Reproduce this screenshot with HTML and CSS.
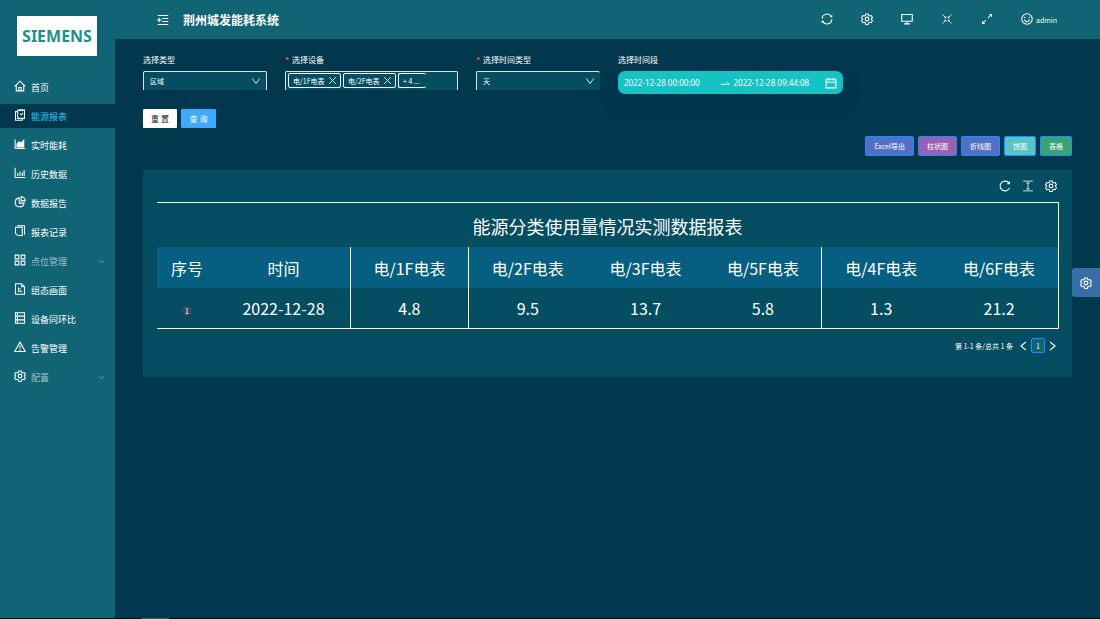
FILE: index.html
```html
<!DOCTYPE html>
<html lang="zh-CN">
<head>
<meta charset="utf-8">
<title>荆州城发能耗系统</title>
<link rel="stylesheet" href="styles.css">
</head>
<body>
<svg class="defs" aria-hidden="true">
  <symbol id="gear" viewBox="0 0 16 16"><path d="M6.3 1.2h3.4l.5 2 1.5.8 2-.6 1.6 2.8-1.4 1.5v1l1.4 1.5-1.6 2.8-2-.6-1.5.8-.5 2H6.3l-.5-2-1.5-.8-2 .6L.7 10.200l1.400-1.500v-1L.7 6.200l1.600-2.800 2 .6 1.500-.8z"/><circle cx="8" cy="8" r="2.500"/></symbol>
  <symbol id="down" viewBox="0 0 16 16"><path d="M2 4l6 8 6-8"/></symbol>
  <symbol id="cross" viewBox="0 0 16 16"><path d="M2 2l12 12M14 2L2 14"/></symbol>
</svg>
<div class="app">
  <aside class="sidebar">
    <div class="logo">SIEMENS</div>
    <nav class="menu">
      <a class="item" href="#"><svg class="icon" viewBox="0 0 16 16"><path d="M1 8.500L8 1.500l7 7M3 7v7.500h10V7M6.500 14.500V10h3v4.500"/></svg><span>首页</span></a>
      <a class="item active" href="#"><svg class="icon" viewBox="0 0 16 16"><path d="M5 3.500H2v11.500h9v-2M5 1.500h9v11H5zM8 0v3M11 0v3M8 6l2 2 2-3"/></svg><span>能源报表</span></a>
      <a class="item" href="#"><svg class="icon" viewBox="0 0 16 16"><path d="M1.500 2v12H15"/><path class="solid" d="M4 12V8l3-3 2 2 4-4v9z"/></svg><span>实时能耗</span></a>
      <a class="item" href="#"><svg class="icon" viewBox="0 0 16 16"><path d="M1.500 1v13H15M5 12V8M8 12V6M11 12V7M13.500 12V4"/></svg><span>历史数据</span></a>
      <a class="item" href="#"><svg class="icon" viewBox="0 0 16 16"><path d="M7 2.500a6 6 0 1 0 6.500 7H7zM9.500 1v5.500H15A5.500 5.500 0 0 0 9.500 1z"/></svg><span>数据报告</span></a>
      <a class="item" href="#"><svg class="icon" viewBox="0 0 16 16"><path d="M2 3h9v11H5l-3-3zM4 1h10v12"/></svg><span>报表记录</span></a>
      <a class="item dim" href="#"><svg class="icon" viewBox="0 0 16 16"><path d="M1.500 1.500h5v5h-5zM9.500 1.500h5v5h-5zM1.500 9.500h5v5h-5zM9.500 9.500h5v5h-5z"/></svg><span>点位管理</span><svg class="arrow" viewBox="0 0 16 16"><path d="M3 5l5 6 5-6"/></svg></a>
      <a class="item" href="#"><svg class="icon" viewBox="0 0 16 16"><path d="M2 1h8l4 4v10H2zM10 1v4h4M6 6v5h5M6 8h3"/></svg><span>组态画面</span></a>
      <a class="item" href="#"><svg class="icon" viewBox="0 0 16 16"><path d="M2 1h12v14H2zM2 5.500h12M2 10.500h12M4.500 1v14"/></svg><span>设备同环比</span></a>
      <a class="item" href="#"><svg class="icon" viewBox="0 0 16 16"><path d="M8 1.500L15 14H1zM8 6v4M8 11v2"/></svg><span>告警管理</span></a>
      <a class="item dim" href="#"><svg class="icon"><use href="#gear"/></svg><span>配置</span><svg class="arrow" viewBox="0 0 16 16"><path d="M3 5l5 6 5-6"/></svg></a>
    </nav>
  </aside>
  <div class="page">
    <header class="topbar">
      <button class="tool" aria-label="收起菜单"><svg class="icon" viewBox="0 0 16 16"><path d="M1 2h14M7 6h8M7 10h8M1 14h14M1 8h5M4 5.500L1 8l3 2.500"/></svg></button>
      <h1 class="brand">荆州城发能耗系统</h1>
      <div class="tools">
        <button class="tool" aria-label="刷新"><svg class="icon" viewBox="0 0 16 16"><path d="M1.500 7.500a6.500 6.500 0 0 1 12-3M14.500 8.500a6.500 6.500 0 0 1-12 3M14.500 3v2h-2.500M1.500 13v-2h2.500"/></svg></button>
        <button class="tool" aria-label="设置"><svg class="icon"><use href="#gear"/></svg></button>
        <button class="tool" aria-label="大屏"><svg class="icon" viewBox="0 0 16 16"><path d="M1 2h14v9H1zM8 11v3M4 14.500h8"/></svg></button>
        <button class="tool" aria-label="全屏"><svg class="icon thin" viewBox="0 0 16 16"><path d="M2 2l4.500 4.500M14 2L9.500 6.500M2 14l4.500-4.500M14 14L9.500 9.500M6.500 4.500v2h-2M9.500 4.500v2h2M6.500 11.500v-2h-2M9.500 11.500v-2h2"/></svg></button>
        <button class="tool" aria-label="展开"><svg class="icon" viewBox="0 0 16 16"><path d="M2 14l4.500-4.500M9 7l5-5M11 2h3v3M2 11v3h3"/></svg></button>
        <button class="tool user"><svg class="icon" viewBox="0 0 16 16"><circle cx="8" cy="8" r="7"/><path d="M4.500 8.500c1 4 6 4 7 0M5 5v1.500M11 5v1.500"/></svg><span>admin</span></button>
      </div>
    </header>
    <main class="content">
      <form class="filters">
        <div class="field short">
          <label for="type">选择类型</label>
          <div class="box"><select id="type"><option>区域</option></select><svg class="caret"><use href="#down"/></svg></div>
        </div>
        <div class="field wide">
          <span class="label" id="device"><b class="star">*</b>选择设备</span>
          <div class="box tags" role="group" aria-labelledby="device">
            <span class="tag">电/1F电表<button type="button" class="remove" aria-label="移除 电/1F电表"><svg><use href="#cross"/></svg></button></span>
            <span class="tag">电/2F电表<button type="button" class="remove" aria-label="移除 电/2F电表"><svg><use href="#cross"/></svg></button></span>
            <span class="tag more">+ 4 ...</span>
          </div>
        </div>
        <div class="field short">
          <label for="period"><b class="star">*</b>选择时间类型</label>
          <div class="box open"><select id="period"><option>天</option></select><svg class="caret"><use href="#down"/></svg></div>
        </div>
        <div class="field range">
          <label for="from">选择时间段</label>
          <div class="dates">
            <input id="from" type="text" value="2022-12-28 00:00:00">
            <svg class="to" viewBox="0 0 16 16"><path d="M1 10h14l-4-4"/></svg>
            <input type="text" aria-label="结束时间" value="2022-12-28 09:44:08">
            <svg class="icon" viewBox="0 0 16 16"><path d="M1.500 3h13v11.500h-13zM1.500 7h13M5 1v4M11 1v4"/></svg>
          </div>
        </div>
      </form>
      <div class="actions">
        <button class="btn reset">重 置</button>
        <button class="btn query">查 询</button>
      </div>
      <div class="charts">
        <button class="chart blue">Excel导出</button>
        <button class="chart purple">柱状图</button>
        <button class="chart blue">折线图</button>
        <button class="chart cyan">饼图</button>
        <button class="chart green">表格</button>
      </div>
      <section class="panel">
        <div class="panel-tools">
          <button class="tool" aria-label="刷新表格"><svg class="icon" viewBox="0 0 16 16"><path d="M13.500 4.500a6.500 6.500 0 1 0 .5 6M14 2v3h-3"/></svg></button>
          <button class="tool" aria-label="密度"><svg class="icon thin" viewBox="0 0 16 16"><path d="M1.500 1.500h13M1.500 14.500h13M8 3v10M6 5l2-2 2 2M6 11l2 2 2-2"/></svg></button>
          <button class="tool" aria-label="列设置"><svg class="icon"><use href="#gear"/></svg></button>
        </div>
        <table class="report">
          <colgroup><col class="c-index"><col class="c-time"><col span="6"></colgroup>
          <thead>
            <tr class="title"><th colspan="8">能源分类使用量情况实测数据报表</th></tr>
            <tr class="heads"><th>序号</th><th class="line">时间</th><th class="line">电/1F电表</th><th>电/2F电表</th><th>电/3F电表</th><th class="line">电/5F电表</th><th>电/4F电表</th><th>电/6F电表</th></tr>
          </thead>
          <tbody>
            <tr><td><span class="badge">1</span></td><td class="line">2022-12-28</td><td class="line">4.8</td><td>9.5</td><td>13.7</td><td class="line">5.8</td><td>1.3</td><td>21.2</td></tr>
          </tbody>
        </table>
        <div class="pager">
          <span>第 1-1 条/总共 1 条</span>
          <button class="step" aria-label="上一页"><svg viewBox="0 0 8 12"><path d="M7 1L1 6l6 5"/></svg></button>
          <button class="current">1</button>
          <button class="step" aria-label="下一页"><svg viewBox="0 0 8 12"><path d="M1 1l6 5-6 5"/></svg></button>
        </div>
      </section>
    </main>
  </div>
</div>
<button class="drawer" aria-label="主题设置"><svg class="icon"><use href="#gear"/></svg></button>
<div class="scrollbar"></div>
</body>
</html>
```

FILE: styles.css
```css
* { box-sizing: border-box; }
body {
  margin: 0;
  background: #01384e;
  color: #fff;
  font-family: "Noto Sans CJK SC", "Noto Sans", sans-serif;
  font-size: 8px;
  line-height: 12px;
}
button, input, select { font: inherit; color: inherit; margin: 0; padding: 0; border: 0; background: none; }
button { cursor: pointer; }
svg { display: block; fill: none; stroke: currentColor; stroke-width: 1.4; }
.defs { position: absolute; width: 0; height: 0; }
.solid { fill: currentColor; }
.icon { width: 12px; height: 12px; flex: none; }
.thin { stroke-width: 1.1; }

.app { display: flex; min-height: 100vh; }
.sidebar { width: 115px; flex: none; background: #106473; padding-top: 16px; }
.logo {
  width: 80px; height: 40px; margin-left: 17px;
  display: flex; align-items: center; justify-content: center;
  background: #fff; color: #1a918d;
  font: bold 16px/24px "Noto Sans", sans-serif;
}
.menu { display: flex; flex-direction: column; gap: 5px; margin-top: 19px; }
.item {
  display: flex; align-items: center; gap: 5px;
  height: 24px; padding: 1px 10px 0 14px;
  color: #fff; font-size: 9px; text-decoration: none;
}
.item .icon { margin-bottom: 4px; color: #fff; }
.item.active { background: #01384e; color: #26c6ee; }
.item.dim { color: #9fc1c7; }
.arrow { width: 7px; height: 7px; margin-left: auto; }

.page { flex: 1; min-width: 0; }
.topbar { display: flex; align-items: center; height: 39px; padding: 0 43px 0 42px; background: #106473; }
.tool { display: flex; align-items: center; }
.brand { margin: 1px 0 0 14px; font-size: 12px; line-height: 16px; }
.tools { display: flex; align-items: center; gap: 28px; margin: 0 0 2px auto; }
.tools .user { gap: 3px; font-size: 7px; }
.user span { padding-top: 3px; }

.content { padding: 15px 28px; }
.filters { display: flex; gap: 18px; }
.field { display: flex; flex-direction: column; gap: 5px; }
.short { width: 124px; }
.wide { width: 173px; }
.range { width: 225px; }
.star { margin-right: 3px; color: #ff4d4f; }
.box {
  position: relative; height: 19px;
  border: 1px solid #d9e4e7; border-bottom: 0; border-radius: 2px 2px 0 0;
  background: #054d60;
}
.box.open { border-right: 0; }
.box select { width: 100%; height: 100%; padding-left: 6px; appearance: none; font-size: 7px; }
.caret { position: absolute; right: 5px; top: 4px; width: 10px; height: 10px; pointer-events: none; }
.tags { display: flex; gap: 2px; padding: 1px 2px; }
.tag {
  display: flex; align-items: center; justify-content: space-between;
  width: 53px; height: 15px; padding: 0 3px 0 4px;
  border: 1px solid #fff; border-radius: 2px; font-size: 7px; white-space: nowrap;
}
.tag.more { width: 28px; border-right: 0; }
.remove svg { width: 9px; height: 9px; }
.dates {
  display: flex; align-items: center; height: 23px; padding: 0 6px;
  border-radius: 7px; background: #15c3c5; box-shadow: 0 9px 18px rgba(0, 40, 60, .25);
  font-family: "Noto Sans", sans-serif; font-size: 8px;
}
.dates input { width: 80px; min-width: 0; flex: 1; }
.to { width: 10px; height: 10px; margin: 0 4px; }

.actions { display: flex; gap: 4px; margin-top: 15px; }
.btn { height: 19px; border-radius: 1px; }
.reset { width: 34px; background: #fff; color: #222; }
.query { width: 35px; background: #40a9ff; }
.charts { display: flex; justify-content: flex-end; gap: 4px; margin-top: 8px; }
.chart { height: 20px; padding: 0 8px; border: 1px solid #1890ff; border-radius: 2px; font-size: 7px; }
.blue { background: #5470c6; }
.purple { background: #9a60b4; }
.cyan { background: #56c5c3; }
.green { background: #3ba272; }

.panel { margin-top: 14px; padding: 10px 13px 24px 14px; background: #054d60; }
.panel-tools { display: flex; justify-content: flex-end; gap: 11px; padding-right: 2px; }
.report {
  width: 100%; margin-top: 10px; table-layout: fixed; border-spacing: 0;
  border: 1px solid #fff; border-left: 0;
  font-size: 16px; line-height: 24px; text-align: center;
}
.c-index { width: 60px; }
.c-time { width: 134px; }
.report th { font-weight: 400; }
.report th, .report td { padding: 0; height: 40px; }
.report .title th { height: 44px; padding-top: 2px; font-size: 18px; }
.report .heads th { height: 41px; background: #065f80; }
.report .line { border-right: 1px solid #fff; }
.badge {
  display: inline-block; width: 10px; height: 10px; border-radius: 50%;
  background: #344a5f; font-size: 7px; line-height: 10px; vertical-align: middle;
}
.pager { display: flex; justify-content: flex-end; align-items: center; gap: 4px; margin-top: 9px; padding-right: 3px; font-size: 7px; }
.pager > span { margin-right: 3px; }
.step svg { width: 7px; height: 10px; }
.current { width: 14px; height: 15px; border: 1px solid #1890ff; border-radius: 2px; background: #106473; }

.drawer {
  position: fixed; right: 0; top: 268px; width: 28px; height: 29px;
  display: flex; align-items: center; justify-content: center;
  border-radius: 3px 0 0 3px; background: #366fa8;
}
.scrollbar {
  position: fixed; left: 0; right: 0; bottom: 0; height: 1px;
  background: linear-gradient(#555, #555) 141px 0 / 28px 1px no-repeat #080808;
}
```
